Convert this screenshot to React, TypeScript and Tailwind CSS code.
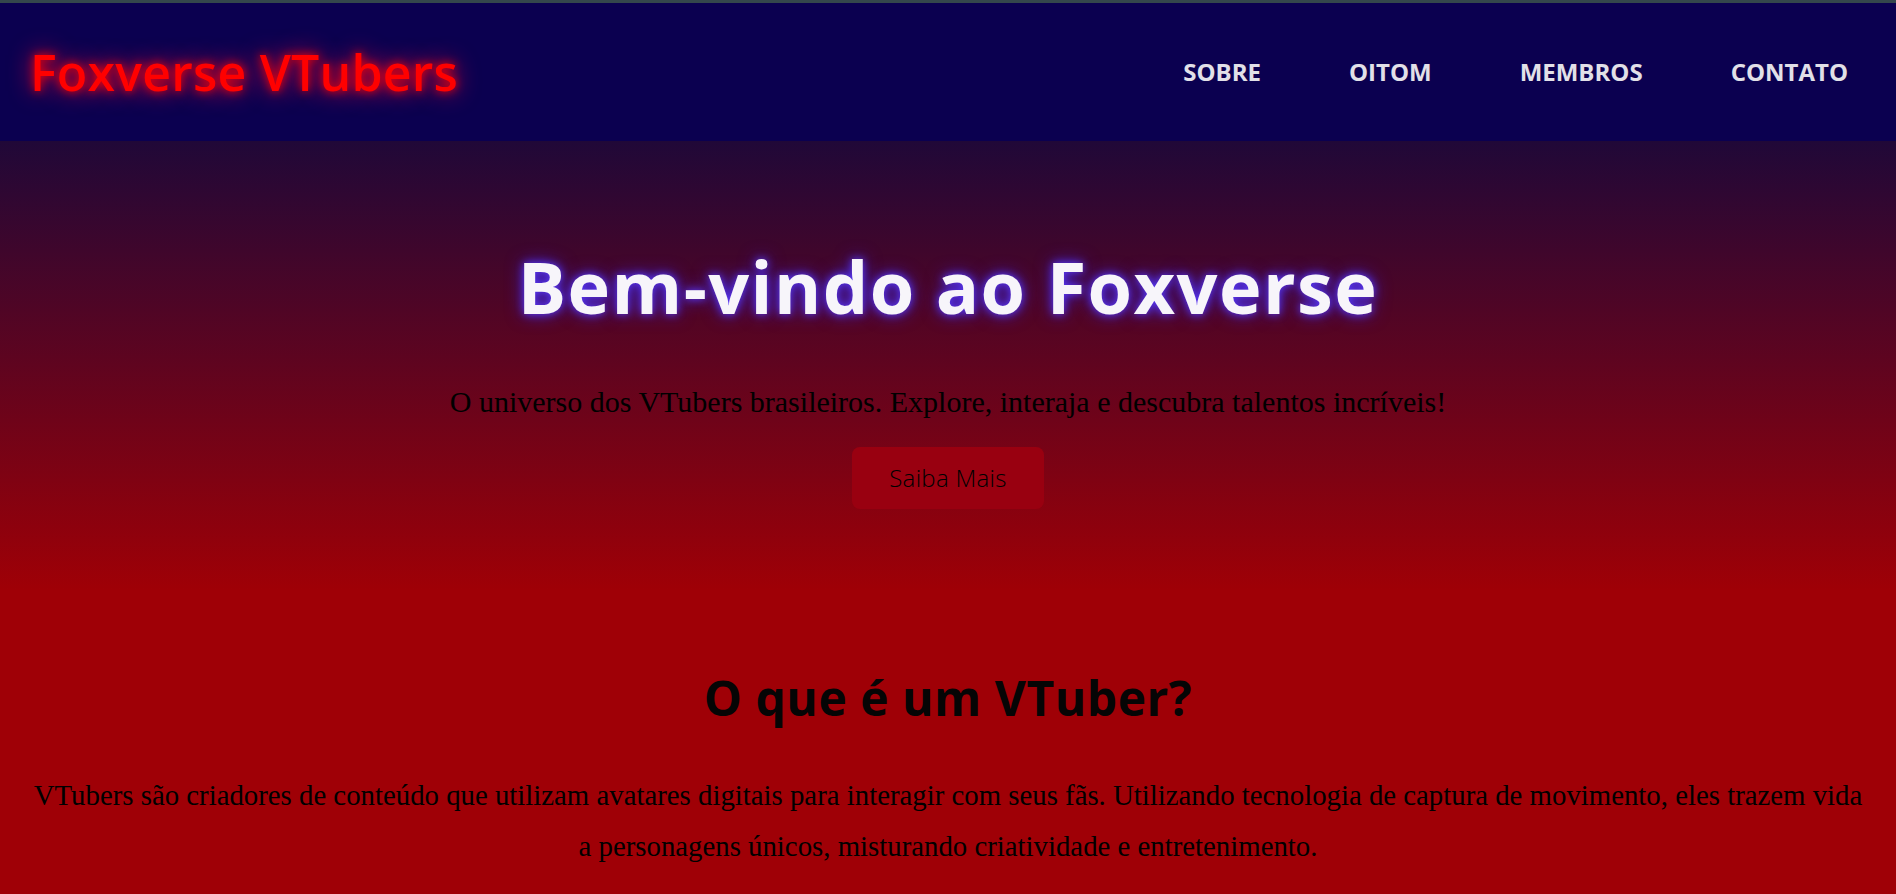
import React from 'react';

const navLinks = ["Sobre", "Oitom", "Membros", "Contato"];

const display = "font-['Open_Sans','Noto_Sans',sans-serif]";
const serif = "font-['Liberation_Serif','Times_New_Roman',serif]";

export default function App() {
    return (
        <div className="min-h-screen bg-[#9f0006]">
            {/* thin window strip */}
            <div className="h-[3px] bg-[#34474c]"></div>

            {/* Header */}
            <header className="h-[138px] bg-[#0b0050] flex items-center justify-between pl-[30px] pr-[48px]">
                <h1 className={`${display} text-[50px] leading-none font-semibold tracking-[0.2px] text-[#ff0000] [text-shadow:0_0_10px_#ff0000,0_0_24px_#ff0040]`}>
                    Foxverse VTubers
                </h1>
                <nav>
                    <ul className={`${display} flex items-center gap-[88px] text-[24px] leading-none font-bold uppercase text-[#e2e0e8]`}>
                        {navLinks.map(link => (
                            <li key={link}>
                                <a href="#">{link}</a>
                            </li>
                        ))}
                    </ul>
                </nav>
            </header>

            {/* Hero */}
            <section className="h-[449px] bg-linear-to-b/srgb from-[#200838] to-[#9f0006] flex flex-col items-center pt-[109px]">
                <h2 className={`${display} text-[72px] leading-none font-bold tracking-[1.4px] text-[#f7f5fa] [text-shadow:0_0_8px_#5b3bff,0_0_18px_#3a1fcc]`}>
                    Bem-vindo ao Foxverse
                </h2>
                <p className={`${serif} mt-[65px] text-[30px] leading-none text-black`}>
                    O universo dos VTubers brasileiros. Explore, interaja e descubra talentos incríveis!
                </p>
                <button className={`${display} mt-[30px] h-[62px] px-[37px] rounded-lg bg-[#990010] text-[24px] font-light tracking-[0.3px] text-black`}>
                    Saiba Mais
                </button>
            </section>

            {/* O que é */}
            <section className="pt-[84px] pb-[30px] px-[30px] text-center">
                <h2 className={`${display} text-[48px] leading-none font-bold tracking-[0.5px] text-[#050505]`}>
                    O que é um VTuber?
                </h2>
                <p className={`${serif} mt-[48px] text-[28.8px] leading-[51px] text-black`}>
                    VTubers são criadores de conteúdo que utilizam avatares digitais para interagir com seus fãs. Utilizando tecnologia de captura de movimento, eles trazem vida a personagens únicos, misturando criatividade e entretenimento.
                </p>
            </section>
        </div>
    );
}
